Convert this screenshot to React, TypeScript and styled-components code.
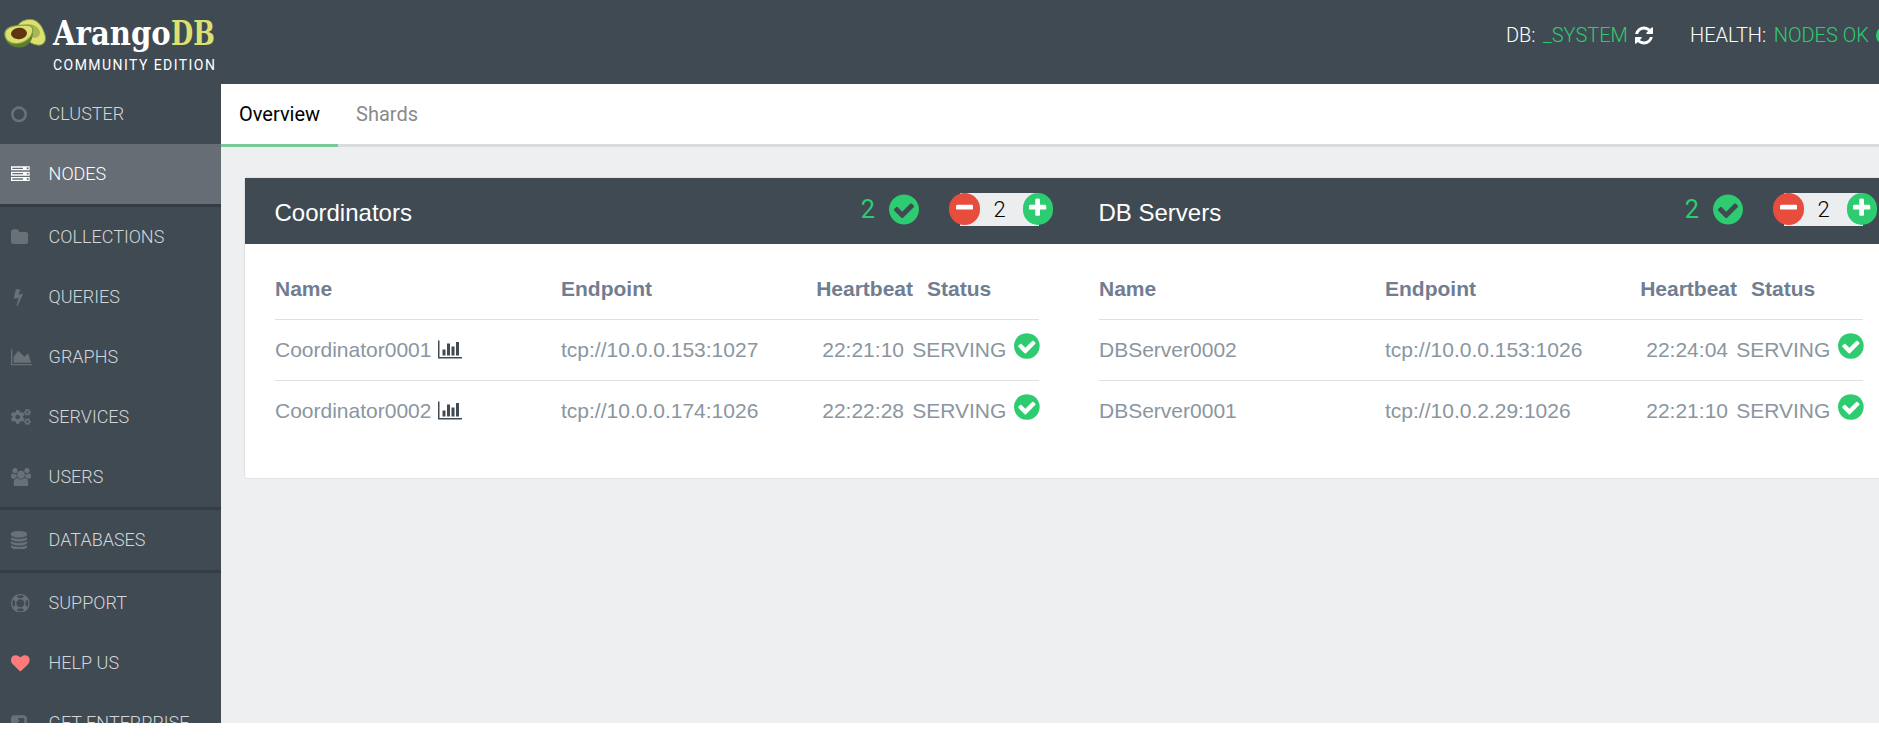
import React from "react";
import styled, { createGlobalStyle } from "styled-components";
import { FaCogs } from "react-icons/fa";

const GlobalStyle = createGlobalStyle`
  html, body { margin: 0; padding: 0; background: #fff; overflow: hidden; }
  *, *::before, *::after { box-sizing: border-box; }
  body { font-family: Roboto, "Liberation Sans", sans-serif; }
`;

const dark = "#404a53";
const green = "#2ecc71";

type Shape = { d: string; box: string };
const disc = "zm252 162q0 209-103 385.5t-279.5 279.5-385.5 103-385.5-103-279.5-279.5-103-385.5 103-385.5 279.5-279.5 385.5-103 385.5 103 279.5 279.5 103 385.5z";
const dot = "q0-40-28-68t-68-28-68 28-28 68 28 68 68 28 68-28 28-68z";
const tier = "v170q0 69-103 128t-280 93.5-385 34.5-385-34.5-280-93.5-103-128v-170q119 84 325 127t443 43z";
const shapes: Record<string, Shape> = {
  ring: { box: "128 0 1536 1792", d: "M896 380q-140 0-259 69t-188 188-69 259 69 259 188 188 259 69 259-69 188-188 69-259-69-259-188-188-259-69zm768 516q0 209-103 385.5t-279.5 279.5-385.5 103-385.5-103-279.5-279.5-103-385.5 103-385.5 279.5-279.5 385.5-103 385.5 103 279.5 279.5 103 385.5z" },
  server: { box: "0 0 1792 1792", d: `M128 1408h1024v-128h-1024v128zm0-512h1024v-128h-1024v128zm1568 448${dot}m-1568-960h1024v-128h-1024v128zm1568 448${dot}m0-512${dot}m96 832v384h-1792v-384h1792zm0-512v384h-1792v-384h1792zm0-512v384h-1792v-384h1792z` },
  folder: { box: "64 0 1664 1792", d: "M1728 608v704q0 92-66 158t-158 66h-1216q-92 0-158-66t-66-158v-960q0-92 66-158t158-66h320q92 0 158 66t66 158v32h672q92 0 158 66t66 158z" },
  bolt: { box: "190 0 1280 1792", d: "M1333 566q18 20 7 44l-540 1157q-13 25-42 25-4 0-14-2-17-5-25.5-19t-4.5-30l197-808-406 101q-4 1-12 1-18 0-31-11-18-15-13-39l201-825q4-14 16-23t28-9h328q19 0 32 12.5t13 29.5q0 8-5 18l-171 463 396-98q8-2 12-2 19 0 34 15z" },
  area: { box: "0 0 2048 1792", d: "M2048 1536v128h-2048v-1536h128v1408h1920zm-384-1024l256 896h-1664v-576l448-576 576 576z" },
  users: { box: "64 0 1920 1792", d: "M657 896q-162 5-265 128h-134q-82 0-138-40.5t-56-118.5q0-353 124-353 6 0 43.5 21t97.5 42.5 119 21.5q67 0 133-23-5 37-5 66 0 139 81 256zm1071 637q0 120-73 189.5t-194 69.5h-874q-121 0-194-69.5t-73-189.5q0-53 3.5-103.5t14-109 26.5-108.5 43-97.5 62-81 85.5-53.5 111.5-20q10 0 43 21.5t73 48 107 48 135 21.5 135-21.5 107-48 73-48 43-21.5q61 0 111.5 20t85.5 53.5 62 81 43 97.5 26.5 108.5 14 109 3.5 103.5zm-1024-1277q0 106-75 181t-181 75-181-75-75-181 75-181 181-75 181 75 75 181zm704 384q0 159-112.5 271.5t-271.5 112.5-271.5-112.5-112.5-271.5 112.5-271.5 271.5-112.5 271.5 112.5 112.5 271.5zm576 225q0 78-56 118.5t-138 40.5h-134q-103-123-265-128 81-117 81-256 0-29-5-66 66 23 133 23 59 0 119-21.5t97.5-42.5 43.5-21q124 0 124 353zm-128-609q0 106-75 181t-181 75-181-75-75-181 75-181 181-75 181 75 75 181z" },
  database: { box: "128 0 1536 1792", d: `M896 768q237 0 443-43t325-127${tier}m0 768q237 0 443-43t325-127${tier}m0-384q237 0 443-43t325-127${tier}m0-1152q208 0 385 34.5t280 93.5 103 128v128q0 69-103 128t-280 93.5-385 34.5-385-34.5-280-93.5-103-128v-128q0-69 103-128t280-93.5 385-34.5z` },
  support: { box: "0 0 1792 1792", d: "M896 0q182 0 348 71t286 191 191 286 71 348-71 348-191 286-286 191-348 71-348-71-286-191-191-286-71-348 71-348 191-286 286-191 348-71zm0 128q-190 0-361 90l194 194q82-28 167-28t167 28l194-194q-171-90-361-90zm-678 1129l194-194q-28-82-28-167t28-167l-194-194q-90 171-90 361t90 361zm678 407q190 0 361-90l-194-194q-82 28-167 28t-167-28l-194 194q171 90 361 90zm0-384q159 0 271.5-112.5t112.5-271.5-112.5-271.5-271.5-112.5-271.5 112.5-112.5 271.5 112.5 271.5 271.5 112.5zm484-217l194 194q90-171 90-361t-90-361l-194 194q28 82 28 167t-28 167z" },
  heart: { box: "0 0 1792 1792", d: "M896 1664q-26 0-44-18l-624-602q-10-8-27.5-26t-55.5-65.5-68-97.5-53.5-121-23.5-138q0-220 127-344t351-124q62 0 126.5 21.5t120 58 95.5 68.5 76 68q36-36 76-68t95.5-68.5 120-58 126.5-21.5q224 0 351 124t127 344q0 221-229 450l-623 600q-18 18-44 18z" },
  external: { box: "128 0 1536 1792", d: "M1408 928v-480q0-26-19-45t-45-19h-480q-42 0-59 39-17 41 14 70l144 144-534 534q-19 19-19 45t19 45l102 102q19 19 45 19t45-19l534-534 144 144q18 19 45 19 12 0 25-5 39-17 39-59zm256-512v960q0 119-84.5 203.5t-203.5 84.5h-960q-119 0-203.5-84.5t-84.5-203.5v-960q0-119 84.5-203.5t203.5-84.5h960q119 0 203.5 84.5t84.5 203.5z" },
  check: { box: "128 0 1536 1792", d: `M1412 734q0-28-18-46l-91-90q-19-19-45-19t-45 19l-408 407-226-226q-19-19-45-19t-45 19l-91 90q-18 18-18 46 0 27 18 45l362 362q19 19 45 19 27 0 46-19l543-543q18-18 18-45${disc}` },
  bars: { box: "0 0 2048 1792", d: "M640 896v512h-256v-512h256zm384-512v1024h-256v-1024h256zm1024 1152v128h-2048v-1536h128v1408h1920zm-640-896v768h-256v-768h256zm384-384v1152h-256v-1152h256z" },
  refresh: { box: "128 0 1536 1792", d: "M1639 1056q0 5-1 7-64 268-268 434.5t-478 166.5q-146 0-282.5-55t-243.5-157l-129 129q-19 19-45 19t-45-19-19-45v-448q0-26 19-45t45-19h448q26 0 45 19t19 45-19 45l-137 137q71 66 161 102t187 36q134 0 250-65t186-179q11-17 53-117 8-23 30-23h192q13 0 22.5 9.5t9.5 22.5zm25-800v448q0 26-19 45t-45 19h-448q-26 0-45-19t-19-45 19-45l138-138q-148-137-349-137-134 0-250 65t-186 179q-11 17-53 117-8 23-30 23h-199q-13 0-22.5-9.5t-9.5-22.5v-7q65-268 270-434.5t480-166.5q146 0 284 55.5t245 156.5l130-129q19-19 45-19t45 19 19 45z" },
  plus: { box: "192 0 1408 1792", d: "M1600 736v192q0 40-28 68t-68 28h-416v416q0 40-28 68t-68 28h-192q-40 0-68-28t-28-68v-416h-416q-40 0-68-28t-28-68v-192q0-40 28-68t68-28h416v-416q0-40 28-68t68-28h192q40 0 68 28t28 68v416h416q40 0 68 28t28 68z" },
  minus: { box: "192 0 1408 1792", d: "M1600 736v192q0 40-28 68t-68 28h-1216q-40 0-68-28t-28-68v-192q0-40 28-68t68-28h1216q40 0 68 28t28 68z" },
};

const Svg = styled.svg<{ $size: number }>`
  display: block;
  flex: none;
  height: ${(p) => p.$size}px;
  width: auto;
  fill: currentColor;
`;
const Icon = ({ name, size }: { name: string; size: number }) => (
  <Svg $size={size} viewBox={shapes[name].box} aria-hidden="true">
    <path d={shapes[name].d} />
  </Svg>
);

const Page = styled.div`
  width: 1879px;
  height: 723px;
  overflow: hidden;
  background: #eeeff1;
  display: flex;
  flex-direction: column;
`;
const Header = styled.header`
  flex: none;
  height: 84px;
  background: ${dark};
  display: flex;
  justify-content: space-between;
  overflow: hidden;
`;
const Brand = styled.div`
  display: flex;
  padding: 18px 0 0 4px;
`;
const BrandText = styled.div`
  display: flex;
  flex-direction: column;
  margin-left: 6px;
`;
const Wordmark = styled.div`
  height: 38px;
  display: flex;
  font: 700 33px/32px "DejaVu Serif Condensed", "DejaVu Serif", serif;
  font-stretch: condensed;
  color: #fff;
`;
const WordPart = styled.span<{ $width: number; $squeeze: number }>`
  width: ${(p) => p.$width}px;
  transform: scaleX(${(p) => p.$squeeze});
  transform-origin: 0 0;
`;
const Lime = styled.span`
  color: #dbe070;
`;
const Edition = styled.span`
  font-size: 14px;
  line-height: 18px;
  letter-spacing: 1.45px;
  color: #fff;
  white-space: nowrap;
`;
const Info = styled.div`
  display: flex;
  align-items: flex-start;
  flex: none;
  width: 373px;
  padding-top: 22px;
  font-size: 20px;
  line-height: 26px;
  font-weight: 300;
  color: #fff;
  white-space: nowrap;
`;
const InfoItem = styled.div<{ $width: number }>`
  flex: none;
  width: ${(p) => p.$width}px;
  display: flex;
  gap: 7.5px;
  align-items: center;
`;
const Good = styled.span`
  color: ${green};
`;
const Body = styled.div`
  flex: 1;
  min-height: 0;
  display: flex;
`;
const Sidebar = styled.nav`
  flex: none;
  width: 221px;
  background: ${dark};
  overflow: hidden;
`;
const NavItem = styled.a<{ $active?: boolean; $divided?: boolean }>`
  display: flex;
  align-items: center;
  height: ${(p) => (p.$divided ? 63 : 60)}px;
  padding-left: 11px;
  border-bottom: ${(p) => (p.$divided ? "3px solid #343d46" : "0")};
  background: ${(p) => (p.$active ? "#666d74" : "transparent")};
  color: ${(p) => (p.$active ? "#fff" : "#d3d6d8")};
  font-size: 18px;
  font-weight: 300;
  white-space: nowrap;
`;
const NavIcon = styled.span<{ $color: string }>`
  flex: none;
  width: 37.6px;
  color: ${(p) => p.$color};
  display: flex;
  font-size: 20px;
`;
const NavLabel = styled.span`
  line-height: 22px;
`;
const Main = styled.main`
  flex: 1;
  min-width: 0;
  overflow: hidden;
`;
const Tabs = styled.div`
  height: 63px;
  background: #fff;
  border-bottom: 3px solid #d9dbdc;
  display: flex;
`;
const Tab = styled.a<{ $active?: boolean }>`
  height: 63px;
  padding: 0 18px;
  line-height: 61px;
  font-size: 20px;
  color: ${(p) => (p.$active ? "#000" : "#8a8a8a")};
  border-bottom: ${(p) => (p.$active ? "3px solid #77cb99" : "0")};
`;
const Card = styled.section`
  width: 1650px;
  height: 302px;
  margin: 30px 0 0 23px;
  background: #fff;
  border: 1px solid #dfe1e4;
  border-radius: 3px;
  display: flex;
`;
const Half = styled.div`
  flex: none;
  width: 824px;
`;
const HalfHeader = styled.div`
  height: 66px;
  padding: 0 16px 0 29.5px;
  background: ${dark};
  display: flex;
  align-items: flex-start;
`;
const Title = styled.h2`
  flex: 1;
  margin: 0;
  font: 400 24px/69px "Liberation Sans", Arial, sans-serif;
  color: #fff;
`;
const Count = styled.span`
  font-size: 25.3px;
  line-height: 64px;
  color: ${green};
`;
const HeaderCheck = styled.span`
  margin: 14px 30px 0 14px;
  color: ${green};
`;
const Scaler = styled.div`
  height: 33px;
  margin-top: 15px;
  display: flex;
  justify-content: space-between;
  background: linear-gradient(#ebedef, #ebedef) 11px 0 / 79px 33px no-repeat;
`;
const RoundButton = styled.button<{ $color: string; $width: number }>`
  width: ${(p) => p.$width}px;
  height: 32px;
  padding: 0 0 2px;
  border: 0;
  border-radius: 16px;
  background: ${(p) => p.$color};
  color: #fff;
  display: flex;
  align-items: center;
  justify-content: center;
`;
const ScaleValue = styled.span`
  width: 43px;
  padding-right: 4px;
  text-align: center;
  font-size: 22px;
  font-weight: 300;
  line-height: 34px;
  color: #000;
`;
const Table = styled.div`
  margin: 15px 30px 0;
  font-family: "Liberation Sans", Arial, sans-serif;
  font-size: 21px;
  white-space: nowrap;
`;
const Row = styled.div<{ $head?: boolean; $last?: boolean }>`
  display: grid;
  grid-template-columns: 286px 200px 152px 127px;
  height: 61px;
  align-items: center;
  font-weight: ${(p) => (p.$head ? 700 : 400)};
  color: ${(p) => (p.$head ? "#717d90" : "#8a969f")};
  border-bottom: 1px solid ${(p) => (p.$last ? "transparent" : "#dfe0e1")};
  width: 764px;
`;
const Cell = styled.div<{ $align?: string; $right?: number; $left?: number }>`
  display: flex;
  align-items: center;
  justify-content: ${(p) => p.$align ?? "flex-start"};
  padding-right: ${(p) => p.$right ?? 0}px;
  padding-left: ${(p) => p.$left ?? 0}px;
`;
const StatsIcon = styled.span`
  margin: 0 0 1px 7px;
  color: ${dark};
`;
const StatusIcon = styled.span`
  margin: -9px 0 0 8px;
  color: ${green};
`;

const Avocado = () => (
  <svg width="43" height="31" viewBox="0 0 43 31" aria-hidden="true">
    <path d="M13 8Q18 1 27 1.300C35 2 40 11 41.500 19C42 25 38 28 33 27C26 26 18 20 13 8Z" fill="#dbe070" stroke="#75963a" strokeWidth="1" />
    <ellipse cx="28" cy="13" rx="8.500" ry="6" transform="rotate(30 28 13)" fill="#a9b654" />
    <path d="M1 15C0 24 7 30 16 29.500C26 29 30 20 28.500 11L1 15Z" fill="#5d7b33" />
    <path d="M.8 16C1 10 8 8 14 7.500C20 7 27 6 28.500 10C30 17 23 25 13 25.500C6 26 1 22 .8 16Z" fill="#dbe070" stroke="#82a33e" strokeWidth="1.200" />
    <ellipse cx="15" cy="15.500" rx="8" ry="5.700" transform="rotate(-6 15 15.500)" fill="#603311" />
  </svg>
);

const nav = [
  { label: "CLUSTER", icon: "ring" },
  { label: "NODES", icon: "server", active: true, divided: true },
  { label: "COLLECTIONS", icon: "folder" },
  { label: "QUERIES", icon: "bolt" },
  { label: "GRAPHS", icon: "area" },
  { label: "SERVICES", icon: "cogs" },
  { label: "USERS", icon: "users", divided: true },
  { label: "DATABASES", icon: "database", divided: true },
  { label: "SUPPORT", icon: "support" },
  { label: "HELP US", icon: "heart" },
  { label: "GET ENTERPRISE", icon: "external" },
];

type Node = { name: string; endpoint: string; heartbeat: string };
const coordinators: Node[] = [
  { name: "Coordinator0001", endpoint: "tcp://10.0.0.153:1027", heartbeat: "22:21:10" },
  { name: "Coordinator0002", endpoint: "tcp://10.0.0.174:1026", heartbeat: "22:22:28" },
];
const dbServers: Node[] = [
  { name: "DBServer0002", endpoint: "tcp://10.0.0.153:1026", heartbeat: "22:24:04" },
  { name: "DBServer0001", endpoint: "tcp://10.0.2.29:1026", heartbeat: "22:21:10" },
];

const NodeGroup = ({ title, nodes, stats }: { title: string; nodes: Node[]; stats?: boolean }) => (
  <Half>
    <HalfHeader>
      <Title>{title}</Title>
      <Count>2</Count>
      <HeaderCheck><Icon name="check" size={35} /></HeaderCheck>
      <Scaler>
        <RoundButton $color="#e74c3c" $width={31} aria-label="Remove"><Icon name="minus" size={22} /></RoundButton>
        <ScaleValue>2</ScaleValue>
        <RoundButton $color={green} $width={30} aria-label="Add"><Icon name="plus" size={22} /></RoundButton>
      </Scaler>
    </HalfHeader>
    <Table>
      <Row $head>
        <Cell>Name</Cell>
        <Cell>Endpoint</Cell>
        <Cell $align="flex-end">Heartbeat</Cell>
        <Cell $left={14}>Status</Cell>
      </Row>
      {nodes.map((n, i) => (
        <Row key={n.name} $last={i === nodes.length - 1}>
          <Cell>{n.name}{stats && <StatsIcon><Icon name="bars" size={21} /></StatsIcon>}</Cell>
          <Cell>{n.endpoint}</Cell>
          <Cell $align="flex-end" $right={9}>{n.heartbeat}</Cell>
          <Cell $align="flex-end">SERVING<StatusIcon><Icon name="check" size={30} /></StatusIcon></Cell>
        </Row>
      ))}
    </Table>
  </Half>
);

export default function App() {
  return (
    <>
      <GlobalStyle />
      <Page>
        <Header>
          <Brand>
            <Avocado />
            <BrandText>
              <Wordmark>
                <WordPart $width={118} $squeeze={0.98}>Arango</WordPart>
                <WordPart $width={44} $squeeze={0.86}><Lime>DB</Lime></WordPart>
              </Wordmark>
              <Edition>COMMUNITY EDITION</Edition>
            </BrandText>
          </Brand>
          <Info>
            <InfoItem $width={184}>DB: <Good>_SYSTEM</Good><Icon name="refresh" size={21} /></InfoItem>
            <InfoItem $width={230}>HEALTH: <Good>NODES OK</Good><Good><Icon name="check" size={21} /></Good></InfoItem>
          </Info>
        </Header>
        <Body>
          <Sidebar>
            {nav.map((n) => (
              <NavItem key={n.label} $active={n.active} $divided={n.divided}>
                <NavIcon $color={n.active ? "#fff" : n.icon === "heart" ? "#ff7a7a" : "#687078"}>
                  {n.icon === "cogs" ? <FaCogs /> : <Icon name={n.icon} size={18.67} />}
                </NavIcon>
                <NavLabel>{n.label}</NavLabel>
              </NavItem>
            ))}
          </Sidebar>
          <Main>
            <Tabs>
              <Tab $active>Overview</Tab>
              <Tab>Shards</Tab>
            </Tabs>
            <Card>
              <NodeGroup title="Coordinators" nodes={coordinators} stats />
              <NodeGroup title="DB Servers" nodes={dbServers} />
            </Card>
          </Main>
        </Body>
      </Page>
    </>
  );
}
